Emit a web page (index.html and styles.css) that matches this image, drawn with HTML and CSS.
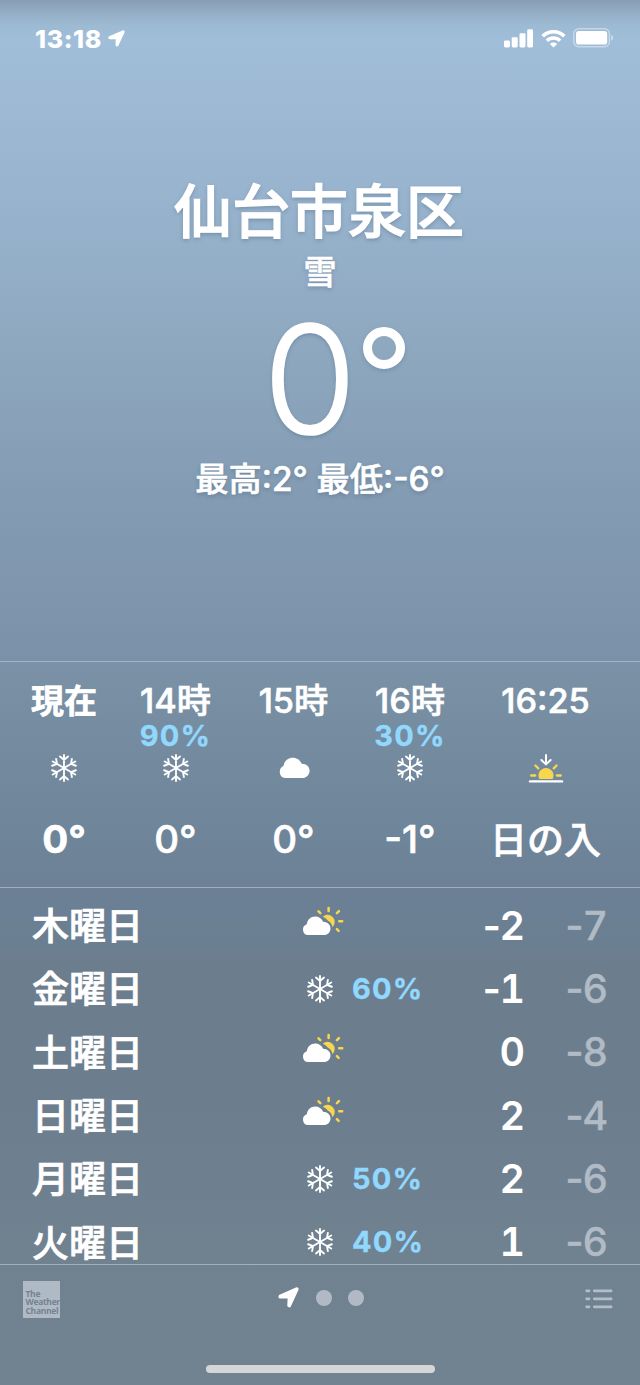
FILE: index.html
```html
<!DOCTYPE html>
<html lang="ja">
<head>
<meta charset="utf-8">
<title>天気</title>
<link rel="stylesheet" href="styles.css">
</head>
<body>
<svg class="defs" width="0" height="0" aria-hidden="true">
  <symbol id="snow" viewBox="-14 -14 28 28">
    <g fill="none" stroke="#fff" stroke-width="1.900" stroke-linecap="round">
      <g id="spoke"><path d="M0 0V-13M-4-11.400 0-8.100 4-11.400"/></g>
      <use href="#spoke" transform="rotate(60)"/>
      <use href="#spoke" transform="rotate(120)"/>
      <use href="#spoke" transform="rotate(180)"/>
      <use href="#spoke" transform="rotate(240)"/>
      <use href="#spoke" transform="rotate(300)"/>
    </g>
  </symbol>
  <symbol id="cloud" viewBox="0 0 32 22">
    <path fill="#fff" d="M7 21A6.300 6.300 0 0 1 5.400 9.100C6.200 4.200 9.900.8 14.700.8c4.200 0 7.500 2.300 8.900 5.900C28.300 6.500 31.600 9.700 31.600 13.700c0 4.100-3.200 7.300-7.400 7.300Z"/>
  </symbol>
  <symbol id="partly" viewBox="0 0 42 30">
    <g stroke="#f8d74f" stroke-width="2.500" stroke-linecap="round">
      <path d="M26.600 2V5M34.900 7.200 36.900 5.200M37.200 15.200H40.200M34.900 23.100 36.600 24.800M18.300 7.200 16.500 5.400"/>
    </g>
    <path fill="#f8d74f" d="M20.800 10.700A7 7 0 1 1 30.400 21.200 9 9 0 0 0 25.800 14.500 10 10 0 0 0 20.800 10.700Z"/>
    <path fill="#fff" d="M6 29A5.500 5.500 0 0 1 4.800 18.300C5.300 13.600 8.700 10.400 13.200 10.400c3.700 0 6.500 2 7.900 5.300C25.400 15.700 28.500 18.700 28.500 22.400c0 3.700-2.900 6.600-6.600 6.600Z"/>
  </symbol>
  <symbol id="sunset" viewBox="0 0 36 30">
    <g stroke="#f8d74f" stroke-width="2.300" stroke-linecap="round">
      <path d="M3.200 22.500H7.200M28.800 22.500H32.800M7.400 12.500 10.300 15.400M28.600 12.500 25.700 15.400"/>
    </g>
    <path fill="#f8d74f" d="M11.400 26A7.500 7.500 0 1 1 24.600 26Z"/>
    <path fill="none" stroke="#fff" stroke-width="2" stroke-linecap="round" stroke-linejoin="round" d="M18 2V10.800M13.400 7 18 11.400 22.600 7"/>
    <path stroke="#fff" stroke-width="2.400" stroke-linecap="round" d="M2 28.400H34"/>
  </symbol>
  <symbol id="arrow" viewBox="0 0 21 21">
    <path fill="#fff" stroke="#fff" stroke-width="3.800" stroke-linejoin="round" d="M18.700 2.300 11.200 18.400 11.600 9.400 2.300 9.600Z"/>
  </symbol>
</svg>
<main class="screen">
  <header class="status">
    <span class="clock">13:18</span>
    <svg class="status-arrow" width="17" height="17"><use href="#arrow"/></svg>
    <div class="status-right">
      <svg width="29" height="19" viewBox="0 0 29 19" fill="#fff"><rect y="11.500" width="6" height="7" rx="1.400"/><rect x="7.700" y="8.200" width="6" height="10.300" rx="1.400"/><rect x="15.500" y="4.300" width="6" height="14.200" rx="1.400"/><rect x="23.200" y=".3" width="5.800" height="18.200" rx="1.400"/></svg>
      <svg width="25" height="19" viewBox="0 0 25 19" fill="none" stroke="#fff"><path stroke-width="3.700" d="M1.700 7.200a15.300 15.300 0 0 1 21.600 0"/><path stroke-width="3.500" d="M5.900 11.700a9.400 9.400 0 0 1 13.200 0"/><path fill="#fff" stroke="none" d="M12.500 18.500 8.900 14.900a5.100 5.100 0 0 1 7.200 0Z"/></svg>
      <svg width="41" height="20" viewBox="0 0 41 20"><rect x=".8" y=".8" width="35.600" height="18" rx="5" fill="none" stroke="#fff" stroke-opacity=".42" stroke-width="1.500"/><rect x="3" y="3" width="31.200" height="13.500" rx="2.800" fill="#fff"/><path d="M38.200 6.800a3.300 3.300 0 0 1 0 6Z" fill="#fff" fill-opacity=".5"/></svg>
    </div>
  </header>

  <section class="current">
    <h1 class="city">仙台市泉区</h1>
    <p class="condition">雪</p>
    <p class="temperature">0<span class="degree"></span></p>
    <p class="range">最高:2° 最低:-6°</p>
  </section>

  <section class="hourly">
    <div class="hour now"><span class="label">現在</span><span class="chance"></span><span class="icon"><svg width="28" height="28"><use href="#snow"/></svg></span><span class="value">0°</span></div>
    <div class="hour"><span class="label">14時</span><span class="chance">90%</span><span class="icon"><svg width="28" height="28"><use href="#snow"/></svg></span><span class="value">0°</span></div>
    <div class="hour"><span class="label">15時</span><span class="chance"></span><span class="icon"><svg width="32" height="22"><use href="#cloud"/></svg></span><span class="value">0°</span></div>
    <div class="hour"><span class="label">16時</span><span class="chance">30%</span><span class="icon"><svg width="28" height="28"><use href="#snow"/></svg></span><span class="value">-1°</span></div>
    <div class="hour"><span class="label">16:25</span><span class="chance"></span><span class="icon"><svg width="36" height="30"><use href="#sunset"/></svg></span><span class="value sunset">日の入</span></div>
  </section>

  <section class="daily">
    <div class="day"><span class="name">木曜日</span><span class="icon"><svg class="partly" width="42" height="30"><use href="#partly"/></svg></span><span class="chance"></span><span class="high">-2</span><span class="low">-7</span></div>
    <div class="day"><span class="name">金曜日</span><span class="icon"><svg width="28" height="28"><use href="#snow"/></svg></span><span class="chance">60%</span><span class="high">-1</span><span class="low">-6</span></div>
    <div class="day"><span class="name">土曜日</span><span class="icon"><svg class="partly" width="42" height="30"><use href="#partly"/></svg></span><span class="chance"></span><span class="high">0</span><span class="low">-8</span></div>
    <div class="day"><span class="name">日曜日</span><span class="icon"><svg class="partly" width="42" height="30"><use href="#partly"/></svg></span><span class="chance"></span><span class="high">2</span><span class="low">-4</span></div>
    <div class="day"><span class="name">月曜日</span><span class="icon"><svg width="28" height="28"><use href="#snow"/></svg></span><span class="chance">50%</span><span class="high">2</span><span class="low">-6</span></div>
    <div class="day"><span class="name">火曜日</span><span class="icon"><svg width="28" height="28"><use href="#snow"/></svg></span><span class="chance">40%</span><span class="high">1</span><span class="low">-6</span></div>
  </section>

  <footer class="toolbar">
    <div class="tools">
      <div class="provider">The<br>Weather<br>Channel</div>
      <div class="pages"><svg width="21" height="21"><use href="#arrow"/></svg><i class="dot"></i><i class="dot"></i></div>
      <svg class="list" width="28" height="20" viewBox="0 0 28 20" fill="none" stroke="#b5bec6" stroke-width="2.700" stroke-linecap="round"><path d="M1.600 1.800H4M9.300 1.800H26.200M1.600 9.800H4M9.300 9.800H26.200M1.600 17.800H4M9.300 17.800H26.200"/></svg>
    </div>
    <div class="home-bar"></div>
  </footer>
</main>
</body>
</html>
```

FILE: styles.css
```css
* { box-sizing: border-box; }
body { margin: 0; }
h1, p { margin: 0; }
svg { display: block; flex: none; }
.defs { position: absolute; }

.screen {
  width: 640px;
  height: 1385px;
  overflow: hidden;
  display: flex;
  flex-direction: column;
  color: #fff;
  font-family: Inter, "Noto Sans CJK JP", sans-serif;
  font-weight: 500;
  white-space: nowrap;
  background: linear-gradient(#869db4 0, #92abc3 10px, #9dbad3 25px, #a0bed9 40px, #9fbbd6 75px, #98b3cd 200px, #8fa9c1 330px, #859eb5 470px, #7b91a9 655px, #7990a5 680px, #71879b 800px, #6b8095 900px, #6b7f92 940px, #6c7d8d 965px, #6c7e8e 1100px, #708190 1250px, #718290 1385px);
}

.status {
  height: 76px;
  padding: 0 26px 0 35px;
  display: flex;
  align-items: center;
}
.clock { font-size: 25px; font-weight: 800; line-height: 30px; letter-spacing: .6px; padding-top: 1px; }
.status-arrow { margin-left: 6px; }
.status-right { margin-left: auto; display: flex; align-items: center; gap: 7.500px; }

.current {
  height: 585px;
  padding-top: 100px;
  display: flex;
  flex-direction: column;
  align-items: center;
  text-shadow: 0 2px 4px rgba(50, 75, 100, .35);
}
.city { font-size: 58px; font-weight: 500; line-height: 72px; margin-right: 2px; -webkit-text-stroke: 1.200px #fff; }
.condition { font-size: 33px; line-height: 48px; -webkit-text-stroke: .6px #fff; }
.temperature {
  height: 131px;
  margin-top: 27px;
  display: flex;
  font-size: 151px;
  font-weight: 300;
  line-height: 112px;
  padding-left: 28px;
  -webkit-text-stroke: 1.500px #fff;
}
.degree {
  width: 42px;
  height: 42px;
  margin: 4px 0 0 6px;
  border: 9px solid #fff;
  border-radius: 50%;
  box-shadow: 0 2px 4px rgba(50, 75, 100, .2);
}
.range { font-size: 33.300px; line-height: 50px; -webkit-text-stroke: .6px #fff; }

.hourly {
  height: 227px;
  border-top: 1px solid #a5b4c2;
  border-bottom: 1px solid #a0adba;
  display: grid;
  grid-template-columns: 128px 95px 141px 92px 179px;
}
.hour { display: flex; flex-direction: column; align-items: center; padding-top: 18px; }
.label { font-size: 34.300px; line-height: 42px; -webkit-text-stroke: .6px #fff; }
.hour .chance { height: 30px; line-height: 30px; margin-top: -1px; }
.chance { color: #91d8fe; font-size: 29px; font-weight: 700; letter-spacing: 1.200px; -webkit-text-stroke: .3px #91d8fe; }
.hour .icon { height: 36px; display: flex; align-items: center; margin-top: -1px; }
.value { font-size: 38.500px; line-height: 50px; margin-top: 28px; -webkit-text-stroke: .6px #fff; }
.sunset { font-size: 37px; margin-top: 30px; }
.now .label, .now .value { font-weight: 700; }
.now .label { font-size: 33px; }

.daily { height: 376px; padding-top: 6px; overflow: hidden; }
.day {
  height: 63.300px;
  display: grid;
  grid-template-columns: 268px 40px 82px 102px 83px;
  padding-left: 32px;
  align-items: center;
  line-height: 38px;
}
.name { font-size: 37px; margin-top: 3px; -webkit-text-stroke: .7px #fff; }
.day .icon { display: flex; justify-content: center; }
.partly { margin: -9px -3px 0 3px; }
.day .chance { padding-left: 12px; }
.high, .low { font-size: 39.500px; font-weight: 600; font-variant-numeric: tabular-nums; text-align: right; letter-spacing: -5px; padding-right: 4px; }
.low { color: #b1bbc5; font-weight: 500; -webkit-text-stroke: .4px #b1bbc5; }

.toolbar {
  height: 121px;
  border-top: 1px solid #a5b0ba;
  display: flex;
  flex-direction: column;
  align-items: center;
}
.tools {
  width: 100%;
  height: 68px;
  padding: 0 27px 0 23px;
  display: flex;
  align-items: center;
  justify-content: space-between;
}
.provider {
  width: 37px;
  height: 37px;
  padding: 9px 0 0 2.500px;
  background: #b0bac4;
  color: #738392;
  font: 700 8.500px/8.700px "Open Sans", sans-serif;
  letter-spacing: -.3px;
}
.pages { display: flex; align-items: center; gap: 16px; padding: 0 4px 3px 0; }
.pages svg { margin-right: 1px; }
.dot { width: 16px; height: 16px; border-radius: 50%; background: #b1bac4; }
.home-bar { width: 229px; height: 8px; margin-top: 32px; border-radius: 4px; background: #d6d6d6; }
```
